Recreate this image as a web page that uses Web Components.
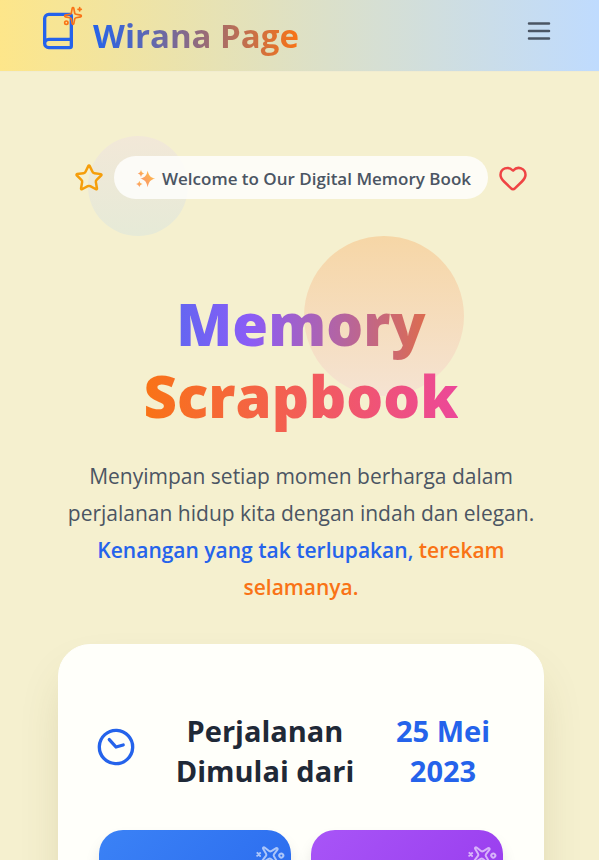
<!DOCTYPE html>
<html lang="id">
<head>
<meta charset="utf-8">
<meta name="viewport" content="width=device-width, initial-scale=1">
<title>Wirana Page</title>
<style>
  html { scrollbar-width: none; }
  body {
    margin: 0;
    background: #f5f0cf;
    color: #4b5563;
    font-family: "Segoe UI", "Open Sans", "Noto Sans", sans-serif;
  }
</style>
</head>
<body>
<scrapbook-page></scrapbook-page>
<script>
const icons = {
  book: '<path d="M4 19.5v-15A2.5 2.5 0 0 1 6.5 2H19a1 1 0 0 1 1 1v18a1 1 0 0 1-1 1H6.5a1 1 0 0 1 0-5H20"/>',
  sparkles: '<path d="M11.017 2.814a1 1 0 0 1 1.966 0l1.051 5.558a2 2 0 0 0 1.594 1.594l5.558 1.051a1 1 0 0 1 0 1.966l-5.558 1.051a2 2 0 0 0-1.594 1.594l-1.051 5.558a1 1 0 0 1-1.966 0l-1.051-5.558a2 2 0 0 0-1.594-1.594l-5.558-1.051a1 1 0 0 1 0-1.966l5.558-1.051a2 2 0 0 0 1.594-1.594z"/><path d="M20 2v4M22 4h-4"/><circle cx="4" cy="20" r="2"/>',
  menu: '<path d="M4 6h16M4 12h16M4 18h16"/>',
  star: '<path d="M11.525 2.295a.53.53 0 0 1 .95 0l2.31 4.679a2.123 2.123 0 0 0 1.595 1.16l5.166.756a.53.53 0 0 1 .294.904l-3.736 3.638a2.123 2.123 0 0 0-.611 1.878l.882 5.14a.53.53 0 0 1-.771.56l-4.618-2.428a2.122 2.122 0 0 0-1.973 0L6.396 21.01a.53.53 0 0 1-.77-.56l.881-5.139a2.122 2.122 0 0 0-.611-1.879L2.16 9.795a.53.53 0 0 1 .294-.906l5.165-.755a2.122 2.122 0 0 0 1.597-1.16z"/>',
  heart: '<path d="M2 9.5a5.5 5.5 0 0 1 9.591-3.676.56.56 0 0 0 .818 0A5.49 5.49 0 0 1 22 9.5c0 2.29-1.5 4-3 5.5l-5.492 5.313a2 2 0 0 1-3 .019L5 15c-1.5-1.5-3-3.2-3-5.5"/>',
  clock: '<circle cx="12" cy="12" r="10"/><path d="M12 6v6l4 2"/>',
  glitter: '<defs><linearGradient id="g" x1="0" y1="1" x2="1" y2="0"><stop offset="0" stop-color="#f98a72"/><stop offset="1" stop-color="#ffc443"/></linearGradient></defs><g fill="url(#g)" stroke="none"><path d="M14 2c1.500 6 3 8 9 9.500-6 1.500-7.500 4-9 10.500-1.500-6.500-3-9-9-10.500 6-1.500 7.500-3.500 9-9.500z"/><path d="M6 1c.6 3 1.400 3.500 4 4.500C7.400 6.500 6.600 7 6 10 5.400 7 4.600 6.500 2 5.500 4.600 4.500 5.400 4 6 1z"/><path d="M4 14c.6 2.500 1.400 3 4 4-2.600 1-3.400 1.500-4 4-.6-2.500-1.400-3-4-4 2.600-1 3.400-1.500 4-4z"/></g>'
};

class LineIcon extends HTMLElement {
  connectedCallback() {
    const root = this.attachShadow({ mode: 'open' });
    root.innerHTML = `
      <style>
        :host { display: inline-block; flex: none; width: 24px; height: 24px; }
        svg { display: block; width: 100%; height: 100%; overflow: visible; }
      </style>
      <svg viewBox="0 0 24 24" fill="none" stroke="currentColor" stroke-width="2"
        stroke-linecap="round" stroke-linejoin="round" aria-hidden="true">${icons[this.getAttribute('name')]}</svg>`;
  }
}
customElements.define('line-icon', LineIcon);

class SiteHeader extends HTMLElement {
  connectedCallback() {
    this.attachShadow({ mode: 'open' }).innerHTML = `
      <style>
        :host {
          display: flex; align-items: center; justify-content: space-between;
          box-sizing: border-box; height: 72px; padding: 0 39px 10px 38px;
          background: linear-gradient(90deg, #fde68a, #bfdbfe);
          border-bottom: 1px solid #f1ecd0;
        }
        a { display: flex; align-items: center; gap: 15px; text-decoration: none; }
        .mark { position: relative; display: flex; color: #2563eb; }
        .mark line-icon { width: 40px; height: 40px; }
        .mark .spark { position: absolute; top: -5px; right: -5px; width: 20px; height: 20px; color: #f97316; }
        .name {
          padding-top: 10px; font-size: 33px; line-height: 40px; font-weight: 700;
          background: linear-gradient(90deg, #2563eb, #f97316);
          -webkit-background-clip: text; background-clip: text; color: transparent;
        }
        button { display: flex; padding: 6px; border: 0; background: none; color: #4b5563; }
        button line-icon { width: 30px; height: 30px; }
      </style>
      <a href="#">
        <span class="mark"><line-icon name="book"></line-icon><line-icon class="spark" name="sparkles"></line-icon></span>
        <span class="name">Wirana Page</span>
      </a>
      <button type="button" aria-label="Menu"><line-icon name="menu"></line-icon></button>`;
  }
}
customElements.define('site-header', SiteHeader);

class WelcomeBadge extends HTMLElement {
  connectedCallback() {
    this.attachShadow({ mode: 'open' }).innerHTML = `
      <style>
        :host { display: flex; align-items: center; justify-content: center; gap: 10px; }
        line-icon { width: 30px; height: 30px; }
        .star { color: #f59e0b; }
        .heart { color: #ef4444; }
        .pill {
          display: flex; align-items: center; gap: 6px; padding: 9px 17px 7px 22px;
          border-radius: 24px; background: rgba(255, 255, 255, .8);
          font-size: 17px; line-height: 27px; font-weight: 600; white-space: nowrap;
        }
        .pill line-icon { width: 20px; height: 20px; }
      </style>
      <line-icon class="star" name="star"></line-icon>
      <span class="pill"><line-icon name="glitter"></line-icon><slot></slot></span>
      <line-icon class="heart" name="heart"></line-icon>`;
  }
}
customElements.define('welcome-badge', WelcomeBadge);

class HeroTitle extends HTMLElement {
  connectedCallback() {
    this.attachShadow({ mode: 'open' }).innerHTML = `
      <style>
        :host { display: block; text-align: center; }
        h1 { margin: 0; font-size: 58px; line-height: 72px; font-weight: 800; }
        .line {
          display: block; width: fit-content; margin: 0 auto -8px; padding-bottom: 8px;
          color: transparent; -webkit-background-clip: text; background-clip: text;
        }
        .top { background-image: linear-gradient(90deg, #6366f1, #8b5cf6 30%, #dc6c50); }
        .bottom { background-image: linear-gradient(90deg, #f97316, #ec4899); }
      </style>
      <h1><span class="line top"><slot name="top"></slot></span><span class="line bottom"><slot name="bottom"></slot></span></h1>`;
  }
}
customElements.define('hero-title', HeroTitle);

class StatTile extends HTMLElement {
  connectedCallback() {
    this.attachShadow({ mode: 'open' }).innerHTML = `
      <style>
        :host {
          display: flex; justify-content: flex-end; align-items: flex-start;
          box-sizing: border-box; min-height: 160px; padding: 13px 9px;
          border-radius: 24px; color: rgba(255, 255, 255, .6);
          background: linear-gradient(135deg, var(--from), var(--to));
          box-shadow: 0 10px 15px rgba(0, 0, 0, .1);
        }
        line-icon { width: 24px; height: 24px; rotate: -132deg; }
      </style>
      <line-icon name="sparkles"></line-icon>`;
  }
}
customElements.define('stat-tile', StatTile);

class JourneyCard extends HTMLElement {
  connectedCallback() {
    this.attachShadow({ mode: 'open' }).innerHTML = `
      <style>
        :host {
          display: block; padding: 66px 40px 40px;
          border: 1px solid #fffffc; border-radius: 32px; background: #fffffa;
          box-shadow: 0 25px 50px -12px rgba(90, 80, 10, .2);
        }
        h2 {
          display: grid; grid-template-columns: 36px 1fr 120px; align-items: center;
          margin: 0 0 39px; font-size: 29px; line-height: 40px; font-weight: 700;
          color: #1f2937; text-align: center; column-gap: 24px;
        }
        .label { padding-left: 12px; }
        line-icon { width: 40px; height: 40px; margin: 0 0 8px -3px; color: #2563eb; rotate: -42deg; }
        .date { color: #2563eb; }
        .tiles { display: grid; grid-template-columns: 1fr 1fr; gap: 20px; }
      </style>
      <h2><line-icon name="clock"></line-icon><span class="label"><slot name="label"></slot></span><span class="date"><slot name="date"></slot></span></h2>
      <div class="tiles"><slot></slot></div>`;
  }
}
customElements.define('journey-card', JourneyCard);

class ScrapbookPage extends HTMLElement {
  connectedCallback() {
    this.attachShadow({ mode: 'open' }).innerHTML = `
      <style>
        :host { display: block; }
        main { position: relative; padding: 84px 55px 40px 58px; }
        .bubble { position: absolute; z-index: -1; border-radius: 50%; }
        .small { top: 64px; left: 88px; width: 100px; height: 100px; background: linear-gradient(#f2e8d8, #e6ead7); }
        .large { top: 164px; left: 304px; width: 160px; height: 160px; background: linear-gradient(#f6d6a6, #f5e3d2); }
        hero-title { margin-top: 89px; }
        p { margin: 26px 0 38px; font-size: 21px; line-height: 37px; text-align: center; }
        p span { font-weight: 600; }
        .blue { color: #2563eb; }
        .orange { color: #f97316; }
      </style>
      <site-header></site-header>
      <main>
        <div class="bubble small"></div>
        <div class="bubble large"></div>
        <welcome-badge>Welcome to Our Digital Memory Book</welcome-badge>
        <hero-title><span slot="top">Memory</span><span slot="bottom">Scrapbook</span></hero-title>
        <p>Menyimpan setiap momen berharga dalam perjalanan hidup kita dengan indah dan elegan. <span class="blue">Kenangan yang tak terlupakan,</span> <span class="orange">terekam selamanya.</span></p>
        <journey-card>
          <span slot="label">Perjalanan Dimulai dari</span><span slot="date">25 Mei 2023</span>
          <stat-tile style="--from:#3b82f6;--to:#2563eb"></stat-tile>
          <stat-tile style="--from:#a855f7;--to:#9333ea"></stat-tile>
        </journey-card>
      </main>`;
  }
}
customElements.define('scrapbook-page', ScrapbookPage);
</script>
</body>
</html>
